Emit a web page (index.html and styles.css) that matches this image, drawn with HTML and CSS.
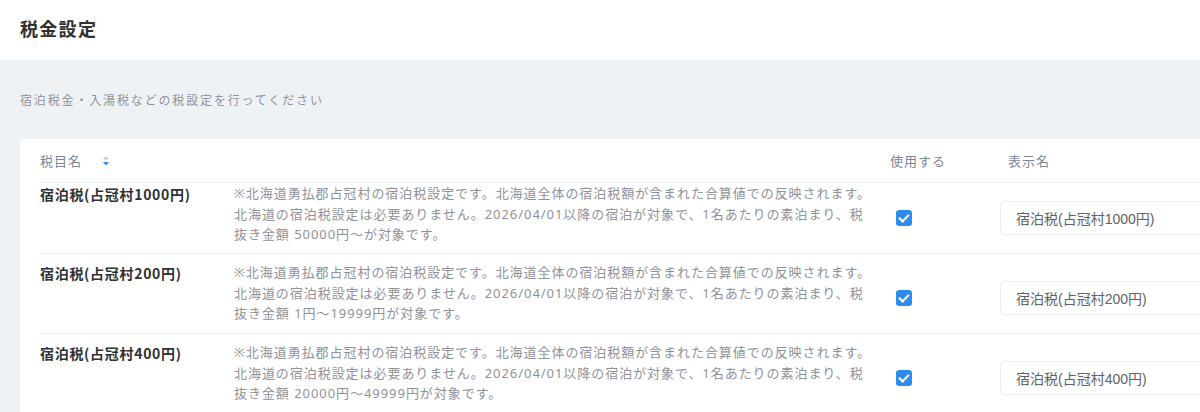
FILE: index.html
```html
<!DOCTYPE html>
<html lang="ja">
<head>
    <meta charset="UTF-8">
    <meta name="viewport" content="width=device-width, initial-scale=1.0">
    <title>税金設定</title>
    <link rel="stylesheet" href="styles.css">
</head>
<body>
    <div class="topbar">
        <h1>税金設定</h1>
    </div>
    <div class="main">
        <p class="lead">宿泊税金・入湯税などの税設定を行ってください</p>
        <div class="card">
            <div class="row head">
                <div class="cell name-col">税目名
                    <span class="sort">
                        <svg width="8" height="10" viewBox="0 0 8 10">
                            <path d="M4 0.5 L7 3.5 L1 3.5 Z" fill="#c0c4cc"/>
                            <path d="M4 9.5 L7 6 L1 6 Z" fill="#2d8cf0"/>
                        </svg>
                    </span>
                </div>
                <div class="cell"></div>
                <div class="cell use-col">使用する</div>
                <div class="cell label-col">表示名</div>
            </div>
            <div class="row item first">
                <div class="cell name">宿泊税(占冠村1000円)</div>
                <div class="cell desc">※北海道勇払郡占冠村の宿泊税設定です。北海道全体の宿泊税額が含まれた合算値での反映されます。北海道の宿泊税設定は必要ありません。2026/04/01以降の宿泊が対象で、1名あたりの素泊まり、税抜き金額 50000円～が対象です。</div>
                <div class="cell check"><span class="box"></span></div>
                <div class="cell field"><input type="text" value="宿泊税(占冠村1000円)"></div>
            </div>
            <div class="row item">
                <div class="cell name">宿泊税(占冠村200円)</div>
                <div class="cell desc">※北海道勇払郡占冠村の宿泊税設定です。北海道全体の宿泊税額が含まれた合算値での反映されます。北海道の宿泊税設定は必要ありません。2026/04/01以降の宿泊が対象で、1名あたりの素泊まり、税抜き金額 1円～19999円が対象です。</div>
                <div class="cell check"><span class="box"></span></div>
                <div class="cell field"><input type="text" value="宿泊税(占冠村200円)"></div>
            </div>
            <div class="row item">
                <div class="cell name">宿泊税(占冠村400円)</div>
                <div class="cell desc">※北海道勇払郡占冠村の宿泊税設定です。北海道全体の宿泊税額が含まれた合算値での反映されます。北海道の宿泊税設定は必要ありません。2026/04/01以降の宿泊が対象で、1名あたりの素泊まり、税抜き金額 20000円～49999円が対象です。</div>
                <div class="cell check"><span class="box"></span></div>
                <div class="cell field"><input type="text" value="宿泊税(占冠村400円)"></div>
            </div>
        </div>
    </div>
</body>
</html>
```

FILE: styles.css
```css
body {
    margin: 0;
    font-family: "Noto Sans CJK JP", "Noto Sans", sans-serif;
    background-color: #eff2f5;
    overflow: hidden;
    height: 412px;
}
.topbar {
    background: white;
    height: 60px;
    display: flex;
    align-items: center;
    padding-left: 20px;
}
.topbar h1 {
    margin: 0;
    font-size: 18px;
    font-weight: bold;
    color: #303133;
    letter-spacing: 1.3px;
    margin-top: -4px;
}
.main {
    padding: 0 0 0 20px;
}
.lead {
    margin: 0;
    padding-top: 30px;
    height: 49px;
    font-size: 12px;
    line-height: 20px;
    letter-spacing: 1.85px;
    color: #909399;
}
.card {
    background: white;
    border-radius: 4px 0 0 0;
    width: 1240px;
    padding-left: 20px;
}
.row {
    display: grid;
    grid-template-columns: 194px 643px 123px 1fr;
    border-bottom: 1px solid #eef0f3;
}
.head {
    height: 43px;
    align-items: center;
    font-size: 13px;
    letter-spacing: 1px;
    color: #7d8693;
}
.head .cell {
    display: flex;
    align-items: center;
}
.sort {
    display: inline-flex;
    margin-left: 20px;
    margin-top: 1px;
}
.use-col {
    padding-left: 13px;
}
.label-col {
    padding-left: 8px;
}
.item {
    height: 80px;
    box-sizing: border-box;
    padding-top: 8px;
}
.item.first {
    height: 71px;
    padding-top: 0;
}
.name {
    font-size: 14px;
    font-weight: bold;
    color: #303133;
    line-height: 22px;
    letter-spacing: 0.7px;
}
.desc {
    font-family: "Noto Sans", "Noto Sans CJK JP", sans-serif;
    font-size: 13px;
    line-height: 20.5px;
    letter-spacing: 0.95px;
    color: #8f9299;
}
.check {
    display: flex;
    align-items: center;
    padding-left: 19px;
}
.box {
    width: 16px;
    height: 16px;
    border-radius: 3px;
    background: #2d8cf0;
    position: relative;
}
.box::after {
    content: "";
    position: absolute;
    left: 5px;
    top: 2px;
    width: 4px;
    height: 8px;
    border: solid white;
    border-width: 0 2px 2px 0;
    transform: rotate(45deg);
}
.field {
    display: flex;
    align-items: center;
}
.field input {
    width: 300px;
    height: 34px;
    box-sizing: border-box;
    border: 1px solid #eceef1;
    border-radius: 4px;
    padding: 0 15px;
    font-family: "Liberation Sans", "Noto Sans CJK JP", sans-serif;
    font-size: 14px;
    color: #606266;
    outline: none;
}
```
